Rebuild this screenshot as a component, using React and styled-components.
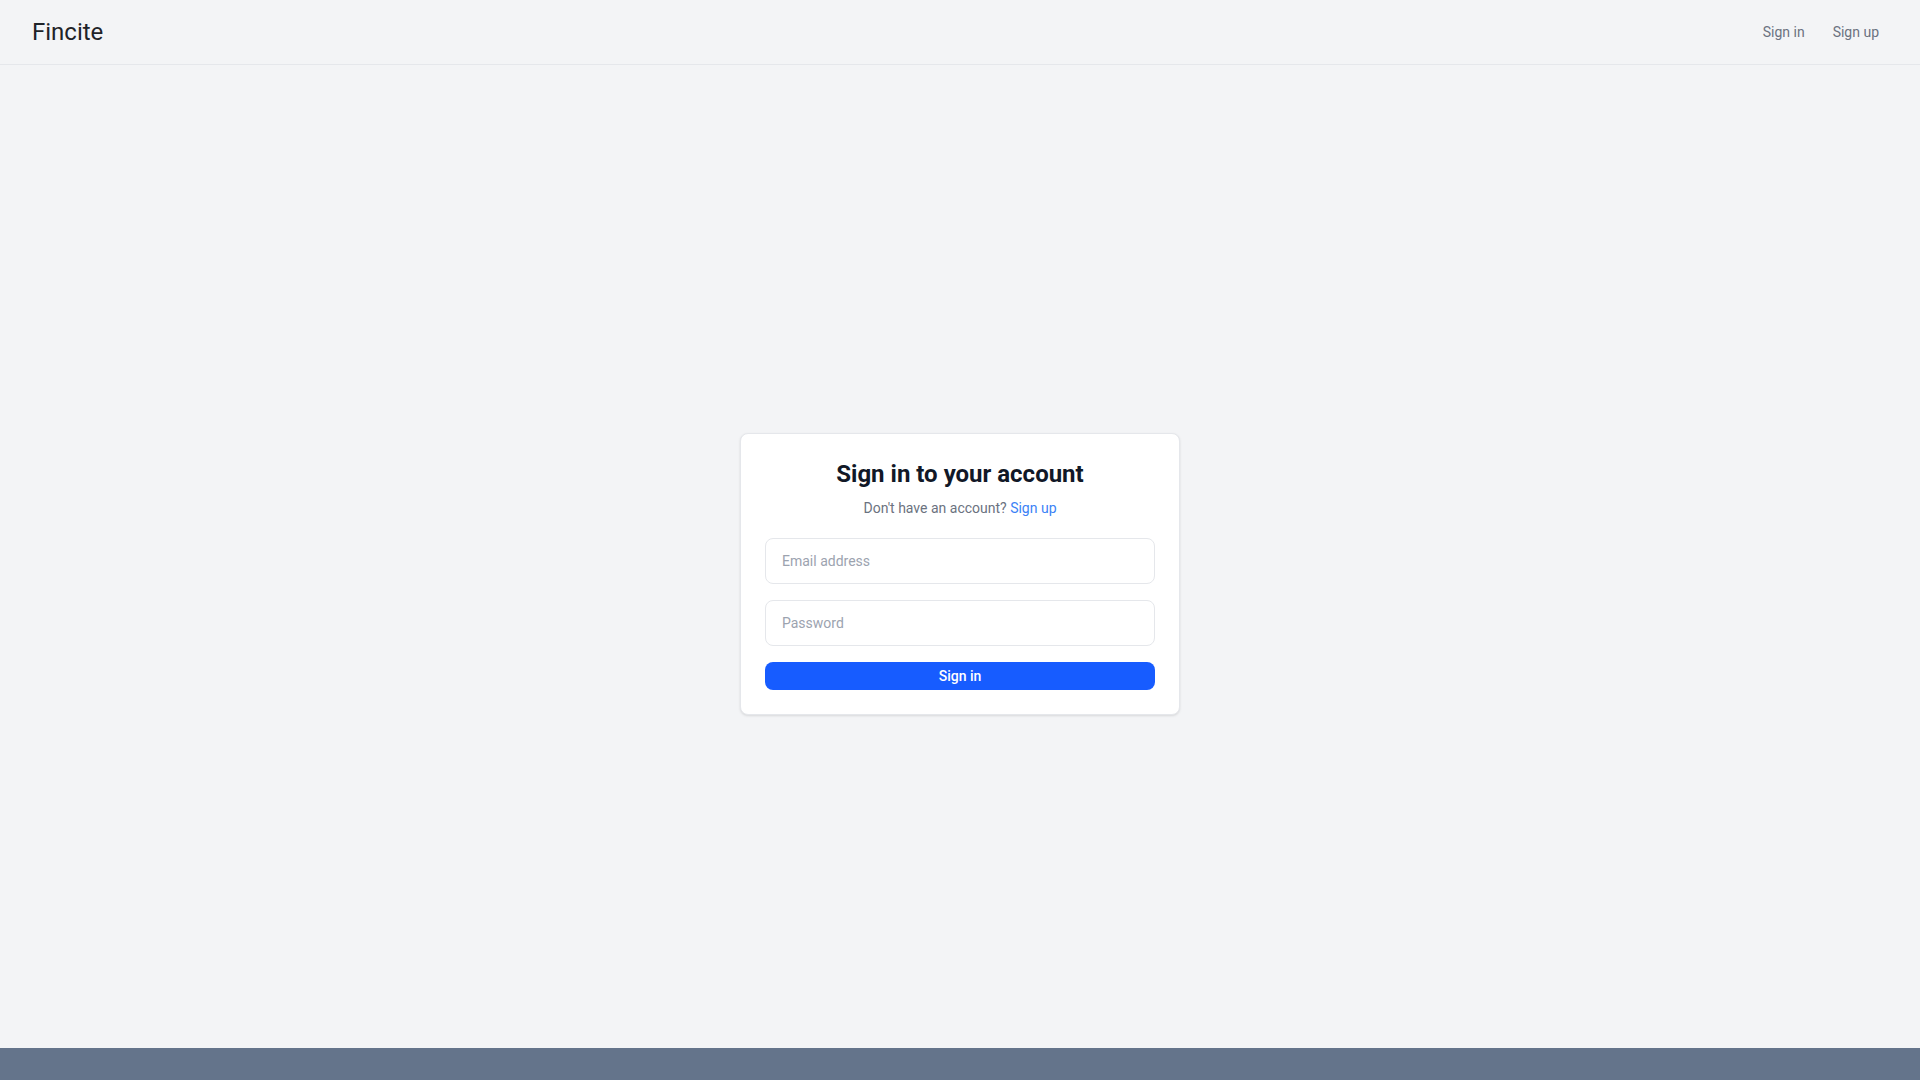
import React from "react";
import styled, { createGlobalStyle } from "styled-components";

const Global = createGlobalStyle`
  html, body { margin: 0; padding: 0; }
  body {
    background: #f3f4f6;
    font-family: Roboto, "Liberation Sans", Arial, sans-serif;
    -webkit-font-smoothing: antialiased;
  }
  * { box-sizing: border-box; }
`;

const Page = styled.div`
  min-height: 100vh;
  display: flex;
  flex-direction: column;
`;

const Header = styled.header`
  height: 65px;
  display: flex;
  align-items: center;
  justify-content: space-between;
  padding: 0 33px 0 32px;
  border-bottom: 1px solid #e5e7eb;
  background: #f3f4f6;
`;

const Brand = styled.div`
  font-size: 24px;
  color: #1f2328;
  line-height: 32px;
  padding-bottom: 1px;
`;

const Nav = styled.nav`
  display: flex;
  gap: 12px;
`;

const NavLink = styled.a`
  font-size: 14px;
  line-height: 20px;
  color: #6b7280;
  padding: 0 8px;
  text-decoration: none;
  cursor: pointer;
`;

const Main = styled.main`
  flex: 1;
  display: flex;
  align-items: center;
  justify-content: center;
  padding-top: 34px;
`;

const Card = styled.div`
  width: 440px;
  background: #fff;
  border: 1px solid #e5e7eb;
  border-radius: 8px;
  box-shadow: 0 1px 3px rgba(0, 0, 0, 0.08), 0 1px 2px rgba(0, 0, 0, 0.04);
  padding: 24px;
  display: flex;
  flex-direction: column;
`;

const Title = styled.h1`
  margin: 0;
  font-size: 24px;
  line-height: 32px;
  font-weight: 700;
  color: #111827;
  text-align: center;
`;

const Subtitle = styled.p`
  margin: 8px 0 20px;
  font-size: 14px;
  line-height: 20px;
  color: #6b7280;
  text-align: center;
`;

const Link = styled.a`
  color: #3b82f6;
  text-decoration: none;
  cursor: pointer;
`;

const Form = styled.form`
  display: flex;
  flex-direction: column;
  gap: 16px;
`;

const Input = styled.input`
  height: 46px;
  width: 100%;
  border: 1px solid #e5e7eb;
  border-radius: 8px;
  padding: 0 16px;
  font-family: inherit;
  font-size: 14px;
  color: #111827;
  background: #fff;
  outline: none;
  &::placeholder { color: #9ca3af; }
`;

const Button = styled.button`
  height: 28px;
  width: 100%;
  border: none;
  border-radius: 8px;
  background: #175cff;
  color: #fff;
  font-family: inherit;
  font-size: 14px;
  font-weight: 500;
  cursor: pointer;
`;

const Footer = styled.footer`
  height: 32px;
  background: #64748b;
`;

export default function App() {
  return (
    <>
      <Global />
      <Page>
        <Header>
          <Brand>Fincite</Brand>
          <Nav>
            <NavLink>Sign in</NavLink>
            <NavLink>Sign up</NavLink>
          </Nav>
        </Header>
        <Main>
          <Card>
            <Title>Sign in to your account</Title>
            <Subtitle>
              Don't have an account? <Link>Sign up</Link>
            </Subtitle>
            <Form onSubmit={(e) => e.preventDefault()}>
              <Input type="email" placeholder="Email address" />
              <Input type="password" placeholder="Password" />
              <Button type="submit">Sign in</Button>
            </Form>
          </Card>
        </Main>
        <Footer />
      </Page>
    </>
  );
}
